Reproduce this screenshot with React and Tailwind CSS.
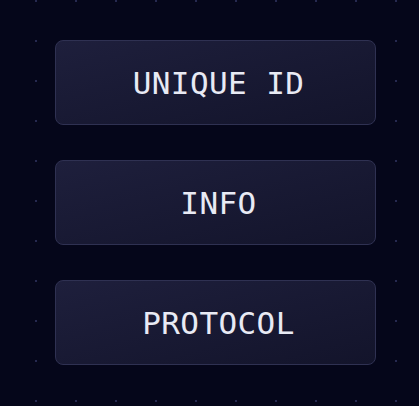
const items = ["UNIQUE ID", "INFO", "PROTOCOL"];

export default function App() {
	return (
		<div className="h-[406px] w-[419px] overflow-hidden bg-[#05061a] bg-[radial-gradient(circle,#262950_1.2px,transparent_1.5px)] bg-[size:40px_40px] bg-[position:16px_21px] pt-[40px]">
			<div className="ml-[55px] flex w-[321px] flex-col gap-[35px]">
				{items.map((label) => (
					<div
						key={label}
						className="flex h-[85px] items-center justify-center rounded-[8px] border border-[#2f3152] bg-gradient-to-br from-[#1e1f3c] to-[#13142b] pt-[1px] pl-[6px] font-['DejaVu_Sans_Mono',monospace] text-[31px] leading-none tracking-[0.4px] text-[#e8eaf4]"
					>
						{label}
					</div>
				))}
			</div>
		</div>
	);
}
